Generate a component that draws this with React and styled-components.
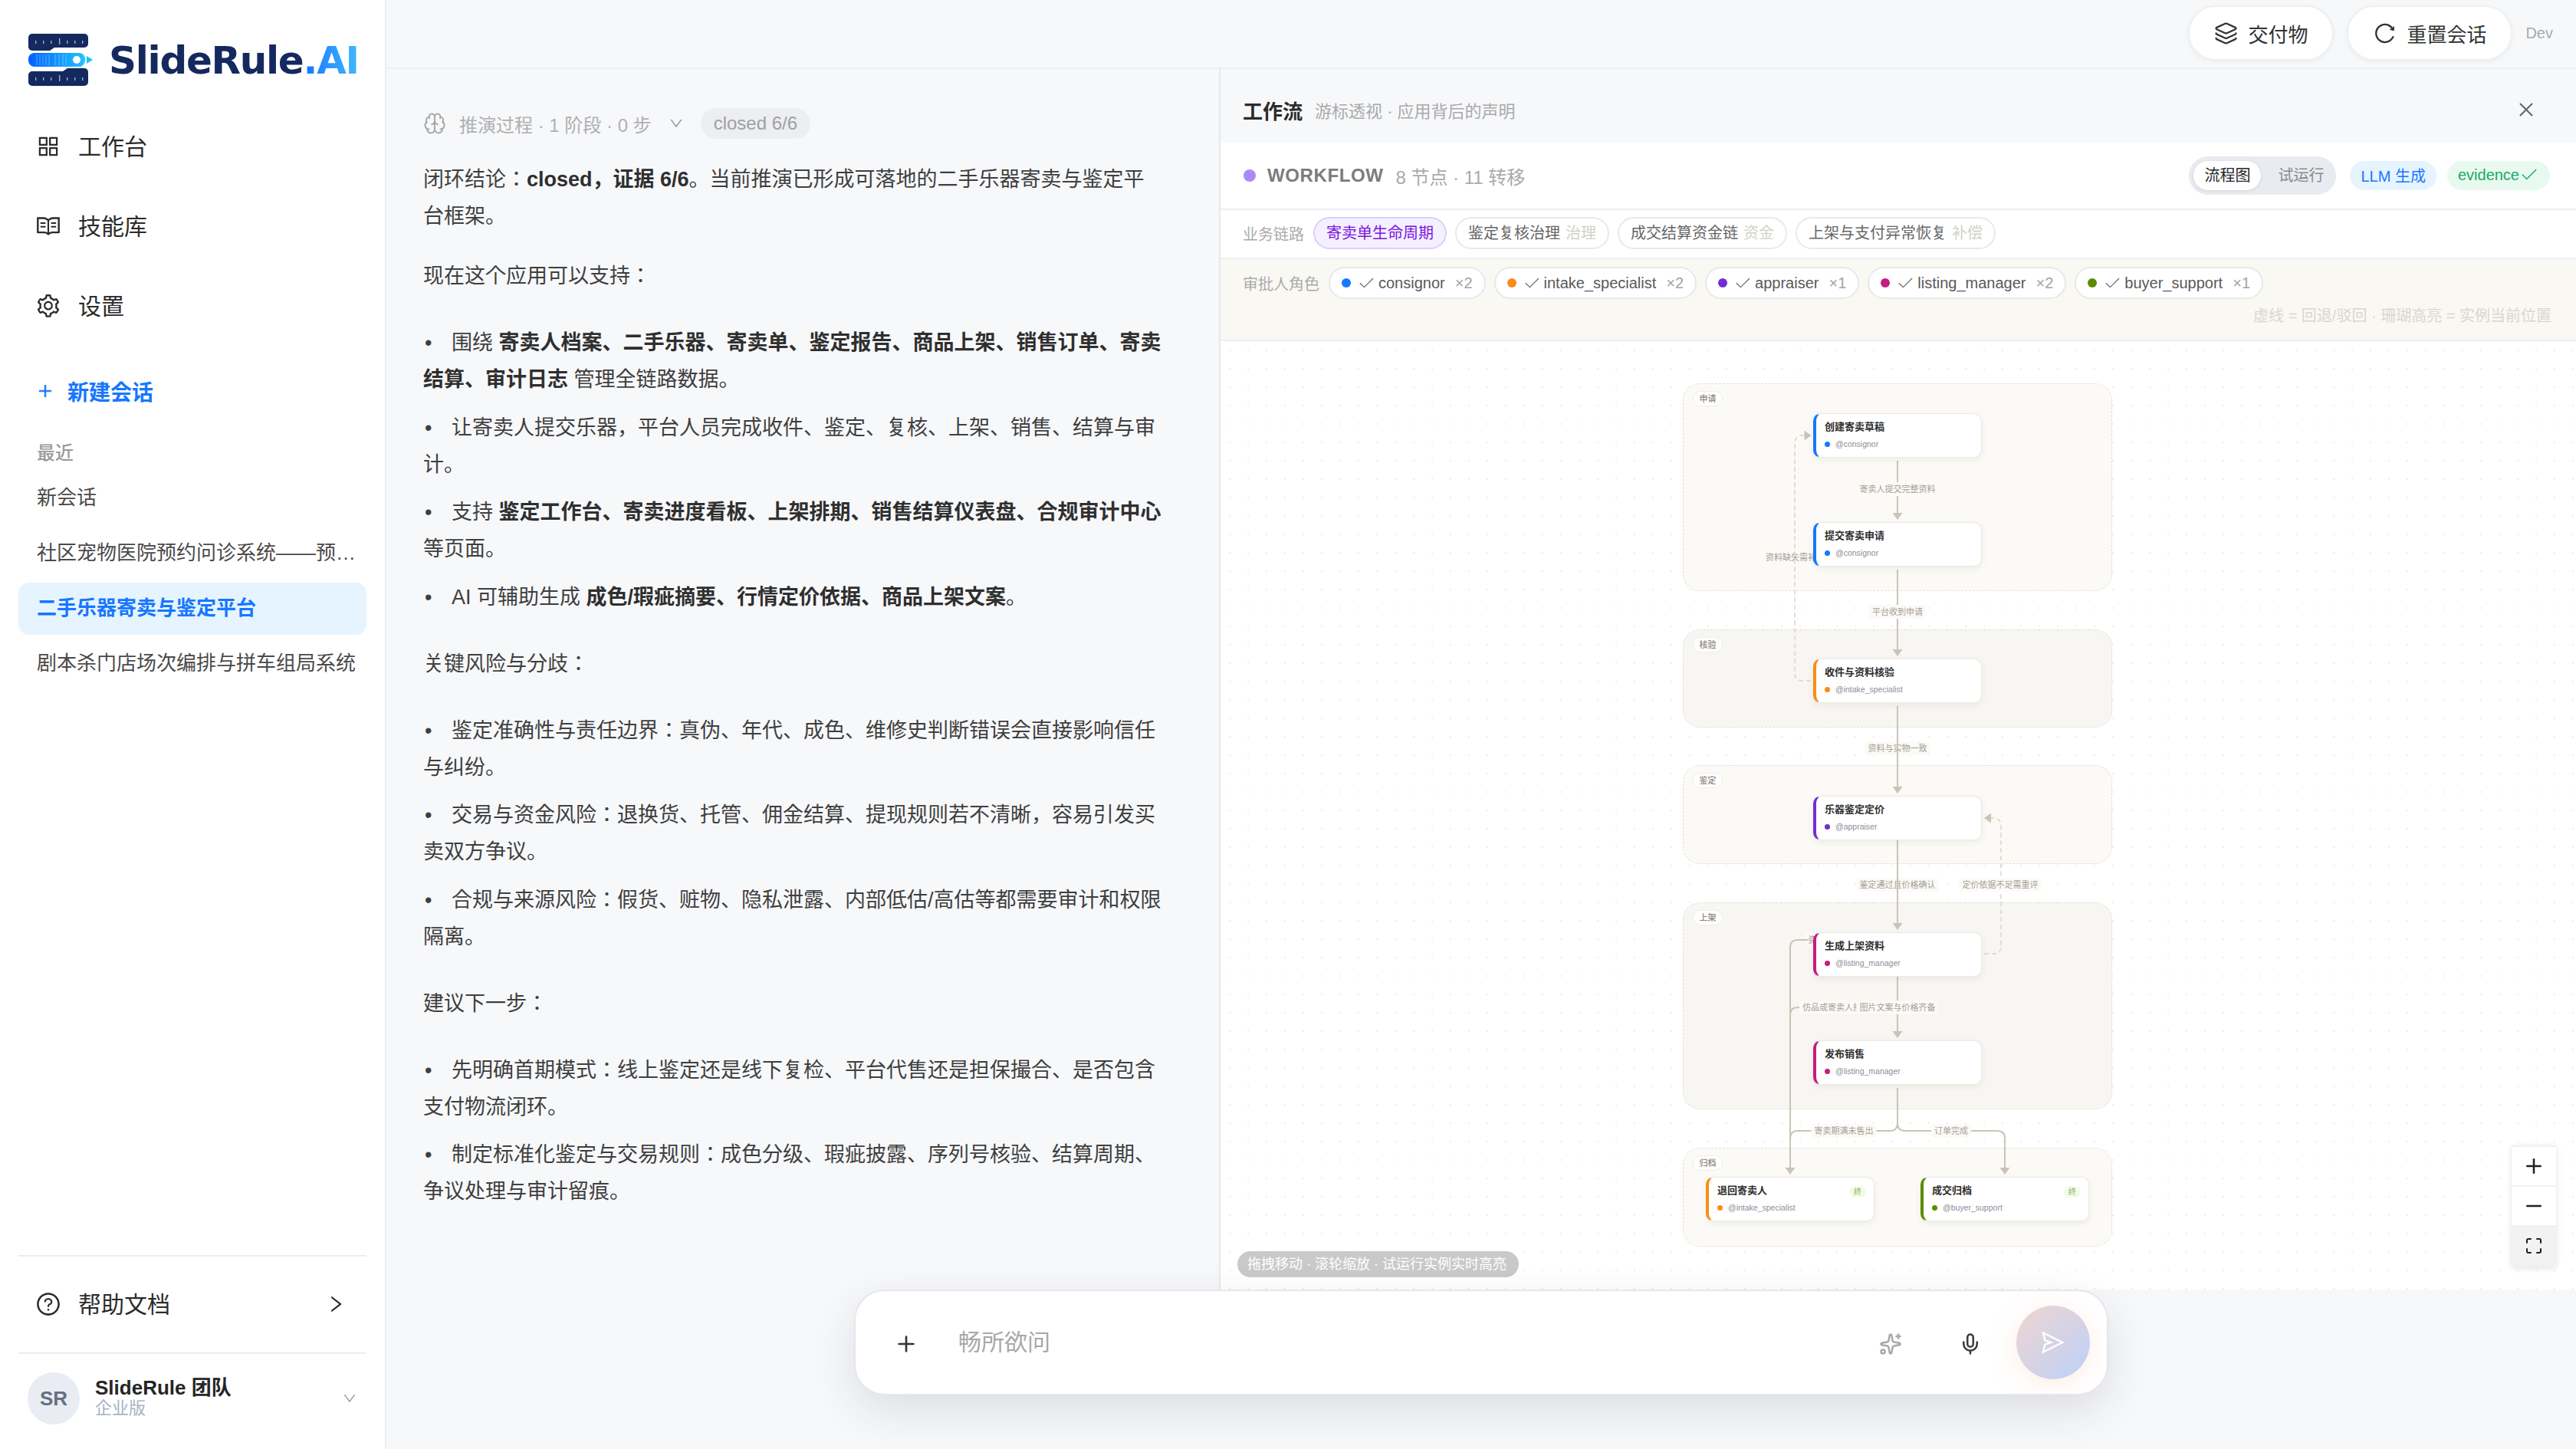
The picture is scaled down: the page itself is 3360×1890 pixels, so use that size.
import React from 'react'
import styled, { createGlobalStyle } from 'styled-components'
import {
    AiOutlineAppstore, AiOutlineRead, AiOutlineSetting, AiOutlinePlus, AiOutlineQuestionCircle,
    AiOutlineRight, AiOutlineDown, AiOutlineReload, AiOutlineClose, AiOutlineSend
} from 'react-icons/ai'
import { Layers, Brain, Sparkles, Mic, Maximize, Plus, Minus, Check } from 'lucide-react'

const GlobalStyle = createGlobalStyle`
    html, body { margin: 0; padding: 0; background: #f7f8fa; }
    body { font-family: "Liberation Sans", "Noto Sans CJK JP", sans-serif; color: #333; }
    * { box-sizing: border-box; }
`

const Shell = styled.div`
    display: flex;
    width: 3360px;
    height: 1890px;
    overflow: hidden;
`

/* sidebar */
const Sidebar = styled.aside`
    display: flex;
    flex-direction: column;
    flex: 0 0 504px;
    min-width: 0;
    border-right: 2px solid #eceef2;
    background: #fff;
`
const Brand = styled.div`
    display: flex;
    align-items: center;
    gap: 20px;
    height: 139px;
    padding: 17px 0 0 36px;
`
const Wordmark = styled.div`
    margin-top: 2px;
    font-family: "DejaVu Sans", sans-serif;
    font-weight: 700;
    font-size: 50px;
    line-height: 1;
    letter-spacing: -1.3px;
    color: #15295f;
    span {
        background: linear-gradient(90deg, #1a73ff, #3fbaff);
        -webkit-background-clip: text;
        background-clip: text;
        color: transparent;
    }
`
const NavItem = styled.div`
    display: flex;
    align-items: center;
    gap: 22px;
    height: 104px;
    padding: 0 0 4px 46px;
    font-size: 30px;
    color: #2b2b2b;
    svg { font-size: 34px; flex: none; margin-top: 4px; }
`
const NewChat = styled.div`
    display: flex;
    align-items: center;
    gap: 18px;
    height: 64px;
    margin-top: 27px;
    padding-left: 48px;
    font-size: 28px;
    font-weight: 700;
    color: #1677ff;
    svg { font-size: 22px; stroke-width: 40; }
`
const RecentTitle = styled.div`
    margin: 30px 0 0 48px;
    height: 38px;
    line-height: 38px;
    font-size: 24px;
    font-weight: 500;
    color: #999;
`
const RecentList = styled.div`
    display: flex;
    flex-direction: column;
    gap: 4px;
    margin: 6px 24px 0;
`
const RecentItem = styled.div`
    height: 68px;
    line-height: 66px;
    padding: 0 13px 0 24px;
    border-radius: 14px;
    font-size: 26px;
    white-space: nowrap;
    overflow: hidden;
    text-overflow: ellipsis;
    color: ${p => (p.$active ? '#1677ff' : '#4a4a4a')};
    font-weight: ${p => (p.$active ? 700 : 400)};
    background: ${p => (p.$active ? '#e6f4ff' : 'transparent')};
`
const SideFooter = styled.div`
    margin: auto 24px 0;
`
const HelpRow = styled.div`
    display: flex;
    align-items: center;
    gap: 22px;
    height: 129px;
    margin: 0;
    padding: 0 26px 5px 22px;
    border-top: 2px solid #eaecef;
    border-bottom: 2px solid #eaecef;
    font-size: 30px;
    color: #2b2b2b;
    svg { font-size: 34px; flex: none; margin-top: 3px; }
    svg:last-child { margin-left: auto; font-size: 28px; }
`
const UserRow = styled.div`
    display: flex;
    align-items: center;
    gap: 20px;
    height: 124px;
    padding: 0 12px 8px;
`
const Avatar = styled.div`
    display: flex;
    align-items: center;
    justify-content: center;
    flex: none;
    width: 68px;
    height: 68px;
    border-radius: 50%;
    background: #e9ecf2;
    color: #667085;
    font-size: 26px;
    font-weight: 700;
`
const UserInfo = styled.div`
    display: flex;
    flex-direction: column;
    flex: 1;
    margin-top: -3px;
    line-height: 1;
    strong { font-size: 26px; color: #262626; }
    span { margin-top: 3px; font-size: 22px; color: #a9b2c3; }
`
const UserCaret = styled(AiOutlineDown)`
    font-size: 20px;
    color: #98a2b3;
`

/* main */
const Main = styled.main`
    display: flex;
    flex-direction: column;
    flex: 1;
    min-width: 0;
`
const TopBar = styled.header`
    display: flex;
    align-items: center;
    justify-content: flex-end;
    gap: 17px;
    height: 90px;
    padding: 0 30px 2px 0;
    border-bottom: 2px solid #eceef2;
`
const TopButton = styled.div`
    display: flex;
    align-items: center;
    gap: 13px;
    height: 72px;
    padding: 0 32px;
    border: 2px solid #eff0f3;
    border-radius: 36px;
    background: #fff;
    box-shadow: 0 2px 6px rgba(0, 0, 0, .05);
    font-size: 26px;
    color: #333;
    svg { font-size: 31px; }
`
const DevTag = styled.span`
    font-size: 20px;
    color: #aaa;
`
const Columns = styled.div`
    display: flex;
    height: 1592px;
`

/* chat */
const ChatPane = styled.section`
    flex: 0 0 1088px;
    padding: 51px 0 0 48px;
    border-right: 2px solid #e6e8ec;
`
const ThoughtRow = styled.div`
    display: flex;
    align-items: center;
    height: 40px;
    margin-bottom: 29px;
    font-size: 24px;
    color: #b0b0b0;
`
const ThoughtText = styled.span`
    margin-left: 17px;
`
const ThoughtCaret = styled(AiOutlineDown)`
    margin: 0 22px 0 22px;
    font-size: 20px;
    color: #999;
`
const ClosedPill = styled.span`
    padding: 0 17px;
    line-height: 40px;
    border-radius: 20px;
    background: #eceef2;
    color: #a0a0a0;
`
const Prose = styled.div`
    width: 964px;
    font-size: 27px;
    line-height: 48px;
    color: #3f3f3f;
    strong { color: #2f2f2f; font-weight: 700; }
`
const Para = styled.p`
    margin: 0 0 30px;
`
const Bullets = styled.ul`
    margin: 39px 0;
    padding: 0;
    list-style: none;
`
const Bullet = styled.li`
    margin-bottom: 14.5px;
    &::before {
        content: "•";
        display: inline-block;
        width: 35px;
        padding-left: 2px;
    }
`

/* workflow panel */
const Panel = styled.section`
    display: flex;
    flex-direction: column;
    flex: 1;
    min-width: 0;
`
const PanelHead = styled.div`
    display: flex;
    align-items: center;
    gap: 16px;
    flex: 0 0 96px;
    padding: 10px 52px 0 29px;
`
const PanelTitle = styled.strong`
    font-size: 26px;
    color: #2b2b2b;
`
const PanelSub = styled.span`
    font-size: 22px;
    color: #aaa;
`
const CloseIcon = styled(AiOutlineClose)`
    margin-left: auto;
    font-size: 26px;
    color: #666;
`
const FlowBar = styled.div`
    display: flex;
    align-items: center;
    flex: 0 0 88px;
    padding: 0 34px 0 30px;
    border-bottom: 2px solid #eceef2;
    background: #fff;
`
const FlowDot = styled.i`
    width: 16px;
    height: 16px;
    border-radius: 50%;
    background: #a98bf8;
`
const FlowName = styled.strong`
    margin-left: 15px;
    font-size: 24px;
    letter-spacing: .6px;
    color: #7c7c7c;
`
const FlowStat = styled.span`
    margin-left: 16px;
    font-size: 24px;
    color: #aaa;
`
const Segment = styled.div`
    display: flex;
    gap: 8px;
    height: 50px;
    margin: 0 4px 0 auto;
    padding: 6px 2px 6px 6px;
    border-radius: 25px;
    background: #e9ebf0;
`
const SegItem = styled.span`
    padding: 0 14px;
    line-height: 38px;
    border-radius: 19px;
    font-size: 20px;
    color: ${p => (p.$on ? '#262626' : '#8c8c8c')};
    background: ${p => (p.$on ? '#fff' : 'transparent')};
    box-shadow: ${p => (p.$on ? '0 1px 4px rgba(0, 0, 0, .1)' : 'none')};
`
const Badge = styled.span`
    display: flex;
    align-items: center;
    height: 38px;
    margin-left: 14px;
    padding: 0 14px 2px;
    border-radius: 19px;
    font-size: 20px;
    color: ${p => p.$color};
    background: ${p => p.$bg};
`
const ChainBar = styled.div`
    display: flex;
    align-items: center;
    gap: 11px;
    flex: 0 0 64px;
    padding: 0 0 2px 29px;
    border-bottom: 2px solid #eceef2;
    background: #fff;
`
const RowLabel = styled.span`
    margin-right: 1px;
    font-size: 20px;
    color: #aaa;
`
const ChainChip = styled.span`
    display: flex;
    gap: 7px;
    height: 42px;
    padding: 0 15px;
    line-height: 38px;
    border: 2px solid ${p => (p.$on ? '#dccdfb' : '#e9e9ec')};
    border-radius: 21px;
    font-size: 20px;
    color: ${p => (p.$on ? '#7a14e0' : '#666')};
    background: ${p => (p.$on ? '#f5f0ff' : '#fff')};
    em { font-style: normal; color: #d3d0ca; }
`
const RoleBar = styled.div`
    flex: 0 0 107px;
    padding: 10px 32px 0 29px;
    border-bottom: 2px solid #eceef2;
    background: #f9f8f3;
`
const RoleRow = styled.div`
    display: flex;
    align-items: center;
    gap: 11px;
`
const RoleChip = styled.span`
    display: flex;
    align-items: center;
    height: 42px;
    padding: 0 15px;
    border: 2px solid #e6e8ec;
    border-radius: 21px;
    background: #fff;
    font-size: 20px;
    color: #595959;
    i {
        width: 12px;
        height: 12px;
        border-radius: 50%;
        background: ${p => p.$color};
    }
    svg { margin: 0 3px 0 8px; color: #666; }
    em { margin-left: 13px; font-style: normal; color: #a3a3a3; }
`
const RoleNote = styled.div`
    margin-top: 9px;
    text-align: right;
    font-size: 20px;
    line-height: 26px;
    color: #d9d6cf;
`
const Canvas = styled.div`
    position: relative;
    flex: 1;
    overflow: hidden;
    background-color: #fff;
    background-image: radial-gradient(circle, #efede8 1px, transparent 1.2px);
    background-size: 24px 24px;
`
const Diagram = styled.div`
    position: absolute;
    left: 603px;
    top: 55px;
    width: 560px;
    height: 1126px;
`
const Lane = styled.div`
    position: absolute;
    left: 0;
    top: ${p => p.$y}px;
    width: 560px;
    height: ${p => p.$h}px;
    border: 1px dashed #e4e0d6;
    border-radius: 22px;
    background: ${p => (p.$alt ? '#f7f6f2' : '#fbfaf6')};
`
const LaneTag = styled.span`
    position: absolute;
    left: 12px;
    top: 9px;
    width: 39px;
    height: 20px;
    border: 1px solid #eeeeee;
    border-radius: 10px;
    background: #fff;
    text-align: center;
    font-size: 11px;
    line-height: 18px;
    font-weight: 500;
    color: #8a857a;
`
const Edges = styled.svg`
    position: absolute;
    left: 0;
    top: 0;
    overflow: visible;
    z-index: ${p => p.$z};
`
const EdgeLabel = styled.span`
    position: absolute;
    left: ${p => p.$x}px;
    top: ${p => p.$y}px;
    transform: translate(-50%, -50%);
    padding: 2px 4px;
    border-radius: 4px;
    background: #fbfaf6;
    font-size: 11px;
    line-height: 14px;
    white-space: nowrap;
    color: #a5a097;
    z-index: ${p => p.$z || 1};
`
const Node = styled.div`
    position: absolute;
    left: ${p => p.$x}px;
    top: ${p => p.$y}px;
    width: 220px;
    height: 58px;
    padding: 9px 10px 0 11px;
    border: 1px solid #ece9e2;
    border-left: 4px solid ${p => p.$color};
    border-radius: 10px;
    background: #fff;
    box-shadow: 0 3px 8px rgba(60, 50, 30, .07);
    z-index: 3;
`
const NodeTitle = styled.div`
    font-size: 13px;
    line-height: 16px;
    font-weight: 700;
    color: #2e2e2e;
`
const NodeRole = styled.div`
    display: flex;
    align-items: center;
    gap: 7px;
    margin-top: 7px;
    font-size: 10.5px;
    line-height: 14px;
    color: #8a8f99;
    i {
        width: 7px;
        height: 7px;
        border-radius: 50%;
        background: ${p => p.$color};
    }
`
const EndTag = styled.span`
    position: absolute;
    right: 10px;
    top: 11px;
    width: 22px;
    height: 15px;
    border-radius: 7px;
    background: #f3fbea;
    text-align: center;
    font-size: 10px;
    line-height: 15px;
    color: #8bb34e;
`
const Hint = styled.div`
    position: absolute;
    left: 22px;
    bottom: 16px;
    height: 34px;
    padding: 0 16px 0 13px;
    line-height: 34px;
    border-radius: 17px;
    background: #c9c9c9;
    font-size: 18px;
    color: #fff;
`
const ZoomTools = styled.div`
    position: absolute;
    right: 26px;
    bottom: 30px;
    display: flex;
    flex-direction: column;
    gap: 2px;
    width: 58px;
    padding: 2px 0;
    background: #f1f1f1;
    box-shadow: 0 2px 8px rgba(0, 0, 0, .12);
`
const ZoomBtn = styled.div`
    display: flex;
    align-items: center;
    justify-content: center;
    height: 50px;
    background: ${p => (p.$muted ? '#f2f2f2' : '#fff')};
    color: #222;
`

/* composer */
const ComposerWrap = styled.div`
    position: relative;
    z-index: 5;
    display: flex;
    justify-content: center;
`
const Composer = styled.div`
    display: flex;
    align-items: center;
    width: 1636px;
    height: 138px;
    padding: 4px 22px 0 50px;
    border: 2px solid #e6e7eb;
    border-radius: 40px;
    background: #fff;
    box-shadow: 0 20px 56px rgba(30, 40, 60, .12);
`
const Placeholder = styled.span`
    flex: 1;
    margin: -10px 0 0 52px;
    font-size: 30px;
    color: #a8a8a8;
`
const SparkIcon = styled(Sparkles)`
    margin-right: 74px;
    color: #a8a8a8;
`
const MicIcon = styled(Mic)`
    margin-right: 45px;
    color: #3a3a3a;
`
const SendButton = styled.div`
    display: flex;
    align-items: center;
    justify-content: center;
    width: 96px;
    height: 96px;
    margin-top: -4px;
    border-radius: 50%;
    background: linear-gradient(135deg, #f0d5d1, #bcd1f8);
    box-shadow: 0 6px 32px rgba(250, 200, 180, .35);
    color: #fff;
    font-size: 34px;
`

const Logo = () => {
    const ticks = [10, 20, 30, 41, 51, 61, 71]
    return (
        <svg width="86" height="68" viewBox="0 0 86 68">
            <defs>
                <linearGradient id="logoBar" x1="0" x2="1" y1="0" y2="0">
                    <stop offset="0" stopColor="#0060ff" />
                    <stop offset="1" stopColor="#22c4ff" />
                </linearGradient>
            </defs>
            <path fill="#14295e" d="M6 0H74a5 5 0 0 1 5 5V13a5 5 0 0 1-5 5H35L29 22H6a5 5 0 0 1-5-5V5a5 5 0 0 1 5-5Z" />
            <path fill="#14295e" d="M6 49H46L52 45H74a5 5 0 0 1 5 5V63a5 5 0 0 1-5 5H6a5 5 0 0 1-5-5V54a5 5 0 0 1 5-5Z" />
            {ticks.map(x => (
                <g key={x} fill="#9fb0cf">
                    <rect x={x} y={x === 41 ? 6 : 9} width="1.4" height={x === 41 ? 8 : 4} />
                    <rect x={x} y={x === 41 ? 54 : 57} width="1.4" height={x === 41 ? 8 : 4} />
                </g>
            ))}
            <rect x="1" y="25" width="74" height="18" rx="8" fill="url(#logoBar)" />
            <path stroke="#fff" strokeOpacity=".35" strokeWidth="1" d="M12 27V41M16 27V41M20 27V41M24 27V41M28 27V41M36 27V41M41 27V41M46 27V41M50 27V41" />
            <circle cx="64" cy="34" r="5" fill="#fff" />
            <polygon points="77,29 85,34 77,39" fill="#16c5ff" />
        </svg>
    )
}

const NODES = [
    { x: 170, y: 39, title: '创建寄卖草稿', role: 'consignor', color: '#1677ff' },
    { x: 170, y: 181, title: '提交寄卖申请', role: 'consignor', color: '#1677ff' },
    { x: 170, y: 359, title: '收件与资料核验', role: 'intake_specialist', color: '#fa8c16' },
    { x: 170, y: 538, title: '乐器鉴定定价', role: 'appraiser', color: '#722ed1' },
    { x: 170, y: 716, title: '生成上架资料', role: 'listing_manager', color: '#c41d7f' },
    { x: 170, y: 857, title: '发布销售', role: 'listing_manager', color: '#c41d7f' },
    { x: 30, y: 1035, title: '退回寄卖人', role: 'intake_specialist', color: '#fa8c16', end: true },
    { x: 310, y: 1035, title: '成交归档', role: 'buyer_support', color: '#5b8c00', end: true }
]

const LANES = [
    { y: 0, h: 271, name: '申请' },
    { y: 321, h: 128, name: '核验', alt: true },
    { y: 498, h: 129, name: '鉴定' },
    { y: 677, h: 270, name: '上架', alt: true },
    { y: 997, h: 129, name: '归档' }
]

const SOLID = [
    'M280 101V170', 'M280 243V348', 'M280 421V527', 'M280 596V705', 'M280 774V846',
    'M280 919V965Q280 975 270 975H150Q140 975 140 985V1024',
    'M280 965Q280 975 290 975H410Q420 975 420 985V1024',
    'M164 726H150Q140 726 140 736V1024',
    'M152 814H150Q140 814 140 824'
]
const HEADS = [
    [280, 178], [280, 356], [280, 535], [280, 713], [280, 854], [140, 1032], [420, 1032]
]

const EDGE = '#c9c4b6'
const DASH = '#dcd5c6'

const Flowchart = () => (
    <Diagram>
        {LANES.map(l => (
            <Lane key={l.name} $y={l.y} $h={l.h} $alt={l.alt}><LaneTag>{l.name}</LaneTag></Lane>
        ))}
        <EdgeLabel $x={146.5} $y={227}>资料缺失需补件</EdgeLabel>
        <EdgeLabel $x={169} $y={726}>资</EdgeLabel>
        <EdgeLabel $x={280} $y={476}>资料与实物一致</EdgeLabel>
        <EdgeLabel $x={280} $y={654}>鉴定通过且价格确认</EdgeLabel>
        <Edges width="560" height="1126" $z={2}>
            <g fill="none" stroke={EDGE} strokeWidth="2">
                {SOLID.map(d => <path key={d} d={d} />)}
            </g>
            <g fill={EDGE}>
                {HEADS.map(([x, y]) => (
                    <polygon key={`${x}-${y}`} points={`${x - 6.5},${y - 9} ${x + 6.5},${y - 9} ${x},${y}`} />
                ))}
                <polygon points="158.5,61.5 158.5,74.5 167.5,68" />
                <polygon points="402,560.5 402,573.5 393,567" />
            </g>
            <g fill="none" stroke={DASH} strokeWidth="1.5" strokeDasharray="6 4">
                <path d="M167 388H156Q146 388 146 378V78Q146 68 156 68H160" />
                <path d="M393 744H405Q415 744 415 734V577Q415 567 405 567H402" />
            </g>
        </Edges>
        <EdgeLabel $x={280} $y={138} $z={2}>寄卖人提交完整资料</EdgeLabel>
        <EdgeLabel $x={280} $y={298} $z={2}>平台收到申请</EdgeLabel>
        <EdgeLabel $x={414} $y={654} $z={2}>定价依据不足需重评</EdgeLabel>
        <EdgeLabel $x={200} $y={814} $z={2}>仿品或寄卖人拒绝</EdgeLabel>
        <EdgeLabel $x={280} $y={814} $z={2}>图片文案与价格齐备</EdgeLabel>
        <EdgeLabel $x={210} $y={975} $z={2}>寄卖期满未售出</EdgeLabel>
        <EdgeLabel $x={350} $y={975} $z={2}>订单完成</EdgeLabel>
        {NODES.map(n => (
            <Node key={n.title} $x={n.x} $y={n.y} $color={n.color}>
                <NodeTitle>{n.title}</NodeTitle>
                <NodeRole $color={n.color}><i />@{n.role}</NodeRole>
                {n.end && <EndTag>终</EndTag>}
            </Node>
        ))}
    </Diagram>
)

const ROLES = [
    ['consignor', 2, '#1677ff'],
    ['intake_specialist', 2, '#fa8c16'],
    ['appraiser', 1, '#722ed1'],
    ['listing_manager', 2, '#c41d7f'],
    ['buyer_support', 1, '#5b8c00']
]

export default function App() {
    return (
        <Shell>
            <GlobalStyle />
            <Sidebar>
                <Brand>
                    <Logo />
                    <Wordmark>SlideRule<span>.AI</span></Wordmark>
                </Brand>
                <NavItem><AiOutlineAppstore />工作台</NavItem>
                <NavItem><AiOutlineRead />技能库</NavItem>
                <NavItem><AiOutlineSetting />设置</NavItem>
                <NewChat><AiOutlinePlus />新建会话</NewChat>
                <RecentTitle>最近</RecentTitle>
                <RecentList>
                    <RecentItem>新会话</RecentItem>
                    <RecentItem>社区宠物医院预约问诊系统——预约问诊</RecentItem>
                    <RecentItem $active>二手乐器寄卖与鉴定平台</RecentItem>
                    <RecentItem>剧本杀门店场次编排与拼车组局系统</RecentItem>
                </RecentList>
                <SideFooter>
                    <HelpRow><AiOutlineQuestionCircle />帮助文档<AiOutlineRight /></HelpRow>
                    <UserRow>
                        <Avatar>SR</Avatar>
                        <UserInfo>
                            <strong>SlideRule 团队</strong>
                            <span>企业版</span>
                        </UserInfo>
                        <UserCaret />
                    </UserRow>
                </SideFooter>
            </Sidebar>
            <Main>
                <TopBar>
                    <TopButton><Layers size={31} strokeWidth={1.8} />交付物</TopButton>
                    <TopButton><AiOutlineReload />重置会话</TopButton>
                    <DevTag>Dev</DevTag>
                </TopBar>
                <Columns>
                    <ChatPane>
                        <ThoughtRow>
                            <Brain size={30} strokeWidth={1.6} color="#a8a8a8" />
                            <ThoughtText>推演过程 · 1 阶段 · 0 步</ThoughtText>
                            <ThoughtCaret />
                            <ClosedPill>closed 6/6</ClosedPill>
                        </ThoughtRow>
                        <Prose>
                            <Para>闭环结论：<strong>closed，证据 6/6</strong>。当前推演已形成可落地的二手乐器寄卖与鉴定平台框架。</Para>
                            <Para>现在这个应用可以支持：</Para>
                            <Bullets>
                                <Bullet>围绕 <strong>寄卖人档案、二手乐器、寄卖单、鉴定报告、商品上架、销售订单、寄卖结算、审计日志</strong> 管理全链路数据。</Bullet>
                                <Bullet>让寄卖人提交乐器，平台人员完成收件、鉴定、复核、上架、销售、结算与审计。</Bullet>
                                <Bullet>支持 <strong>鉴定工作台、寄卖进度看板、上架排期、销售结算仪表盘、合规审计中心</strong> 等页面。</Bullet>
                                <Bullet>AI 可辅助生成 <strong>成色/瑕疵摘要、行情定价依据、商品上架文案</strong>。</Bullet>
                            </Bullets>
                            <Para>关键风险与分歧：</Para>
                            <Bullets>
                                <Bullet>鉴定准确性与责任边界：真伪、年代、成色、维修史判断错误会直接影响信任与纠纷。</Bullet>
                                <Bullet>交易与资金风险：退换货、托管、佣金结算、提现规则若不清晰，容易引发买卖双方争议。</Bullet>
                                <Bullet>合规与来源风险：假货、赃物、隐私泄露、内部低估/高估等都需要审计和权限隔离。</Bullet>
                            </Bullets>
                            <Para>建议下一步：</Para>
                            <Bullets>
                                <Bullet>先明确首期模式：线上鉴定还是线下复检、平台代售还是担保撮合、是否包含支付物流闭环。</Bullet>
                                <Bullet>制定标准化鉴定与交易规则：成色分级、瑕疵披露、序列号核验、结算周期、争议处理与审计留痕。</Bullet>
                            </Bullets>
                        </Prose>
                    </ChatPane>
                    <Panel>
                        <PanelHead>
                            <PanelTitle>工作流</PanelTitle>
                            <PanelSub>游标透视 · 应用背后的声明</PanelSub>
                            <CloseIcon />
                        </PanelHead>
                        <FlowBar>
                            <FlowDot />
                            <FlowName>WORKFLOW</FlowName>
                            <FlowStat>8 节点 · 11 转移</FlowStat>
                            <Segment>
                                <SegItem $on>流程图</SegItem>
                                <SegItem>试运行</SegItem>
                            </Segment>
                            <Badge $color="#1677ff" $bg="#e6f4ff">LLM 生成</Badge>
                            <Badge $color="#1aa866" $bg="#e8faf0">evidence <Check size={26} strokeWidth={1.3} /></Badge>
                        </FlowBar>
                        <ChainBar>
                            <RowLabel>业务链路</RowLabel>
                            <ChainChip $on>寄卖单生命周期</ChainChip>
                            <ChainChip>鉴定复核治理 <em>治理</em></ChainChip>
                            <ChainChip>成交结算资金链 <em>资金</em></ChainChip>
                            <ChainChip>上架与支付异常恢复 <em>补偿</em></ChainChip>
                        </ChainBar>
                        <RoleBar>
                            <RoleRow>
                                <RowLabel>审批人角色</RowLabel>
                                {ROLES.map(([name, n, color]) => (
                                    <RoleChip key={name} $color={color}>
                                        <i /><Check size={25} strokeWidth={1.1} />{name}<em>×{n}</em>
                                    </RoleChip>
                                ))}
                            </RoleRow>
                            <RoleNote>虚线 = 回退/驳回 · 珊瑚高亮 = 实例当前位置</RoleNote>
                        </RoleBar>
                        <Canvas>
                            <Flowchart />
                            <Hint>拖拽移动 · 滚轮缩放 · 试运行实例实时高亮</Hint>
                            <ZoomTools>
                                <ZoomBtn><Plus size={30} strokeWidth={2} /></ZoomBtn>
                                <ZoomBtn><Minus size={30} strokeWidth={2} /></ZoomBtn>
                                <ZoomBtn $muted><Maximize size={24} strokeWidth={2} /></ZoomBtn>
                            </ZoomTools>
                        </Canvas>
                    </Panel>
                </Columns>
                <ComposerWrap>
                    <Composer>
                        <Plus size={32} strokeWidth={2} color="#333" />
                        <Placeholder>畅所欲问</Placeholder>
                        <SparkIcon size={30} strokeWidth={2} />
                        <MicIcon size={30} strokeWidth={2} />
                        <SendButton><AiOutlineSend /></SendButton>
                    </Composer>
                </ComposerWrap>
            </Main>
        </Shell>
    )
}
